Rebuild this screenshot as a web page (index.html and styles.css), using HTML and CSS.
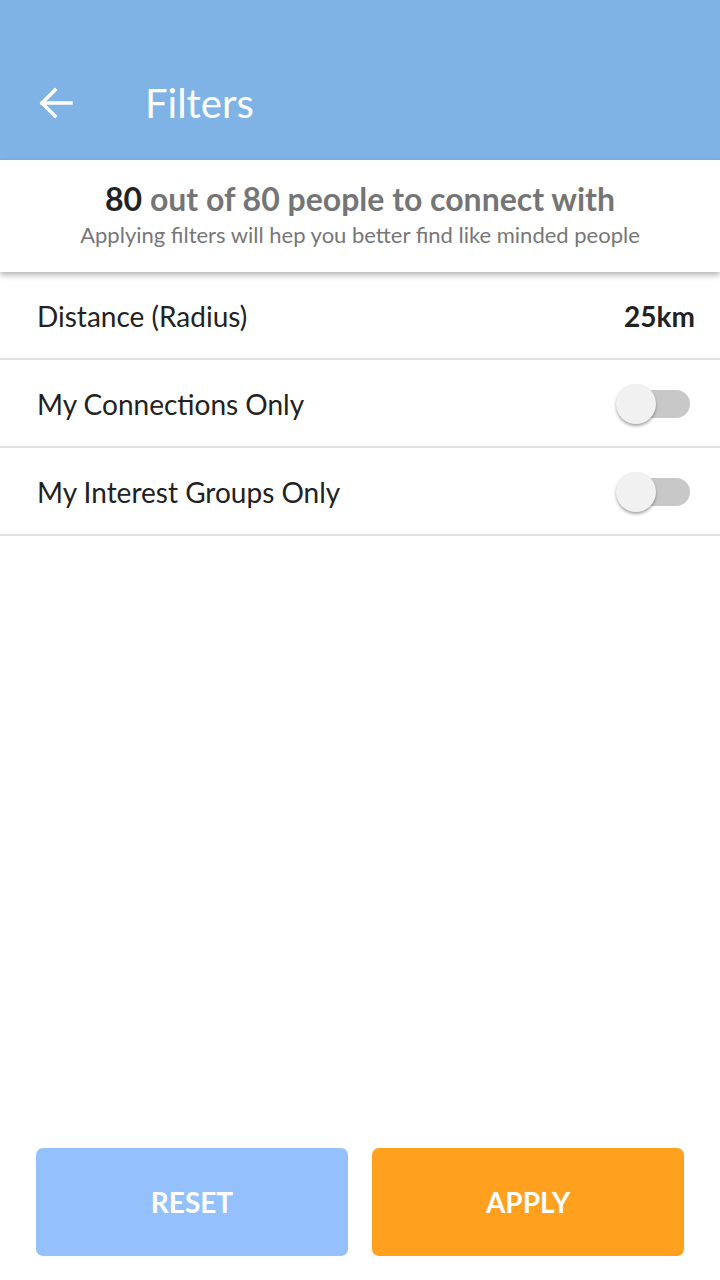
FILE: index.html
```html
<!DOCTYPE html>
<html>
<head>
<meta charset="utf-8">
<link rel="stylesheet" href="styles.css">
</head>
<body>
<div class="app">
  <header class="topbar">
    <svg class="back" width="36" height="36" viewBox="0 0 36 36"><path d="M33 18H4M17 5L4 18l13 13" fill="none" stroke="#fff" stroke-width="3.4" stroke-linecap="square"/></svg>
    <h1 class="title">Filters</h1>
  </header>
  <section class="summary">
    <div class="count"><span class="num">80</span> out of 80 people to connect with</div>
    <div class="hint">Applying filters will hep you better find like minded people</div>
  </section>
  <ul class="list">
    <li class="row"><span class="label">Distance (Radius)</span><span class="value">25km</span></li>
    <li class="row"><span class="label">My Connections Only</span><span class="toggle"><span class="thumb"></span></span></li>
    <li class="row"><span class="label">My Interest Groups Only</span><span class="toggle"><span class="thumb"></span></span></li>
  </ul>
  <div class="spacer"></div>
  <footer class="actions">
    <button class="btn reset">RESET</button>
    <button class="btn apply">APPLY</button>
  </footer>
</div>
</body>
</html>
```

FILE: styles.css
```css
* { box-sizing: border-box; margin: 0; padding: 0; }
html, body { width: 720px; height: 1280px; background: #fff; }
body { font-family: Lato, "Open Sans", sans-serif; }
.app { display: flex; flex-direction: column; height: 1280px; }
.topbar {
  height: 160px; background: #7fb2e5; display: flex; align-items: center;
  padding: 46px 0 0 38px;
}
.back { display: block; }
.title { color: #fff; font-weight: 400; font-size: 40px; margin-left: 71px; }
.summary {
  height: 112px; background: #fff; text-align: center; position: relative; z-index: 1;
  box-shadow: 0 3px 6px rgba(0,0,0,0.3); padding-top: 19px;
}
.count { font-size: 32px; font-weight: 700; color: #757575; line-height: 40px; }
.count .num { color: #222; }
.hint { font-size: 22px; color: #777; line-height: 32px; }
.list { list-style: none; }
.row {
  height: 88px; display: flex; align-items: center; justify-content: space-between;
  border-bottom: 2px solid #e0e0e0; padding: 2px 25px 0 37px;
}
.label { font-size: 28px; color: #222; }
.value { font-size: 28px; font-weight: 700; color: #222; }
.toggle {
  position: relative; width: 72px; height: 28px; border-radius: 14px; background: #c8c8c8;
  margin-right: 5px;
}
.thumb {
  position: absolute; left: -2px; top: -6px; width: 40px; height: 40px; border-radius: 50%;
  background: #f1f1f1; box-shadow: 0 2px 3px rgba(0,0,0,0.35);
}
.spacer { flex: 1; }
.actions { display: flex; gap: 24px; padding: 0 36px 24px; }
.btn {
  flex: 1; height: 108px; border: none; border-radius: 7px; color: #fff;
  font-family: Lato, sans-serif; font-size: 28px; font-weight: 700;
}
.reset { background: #94c0fc; }
.apply { background: #ffa01f; }
```
